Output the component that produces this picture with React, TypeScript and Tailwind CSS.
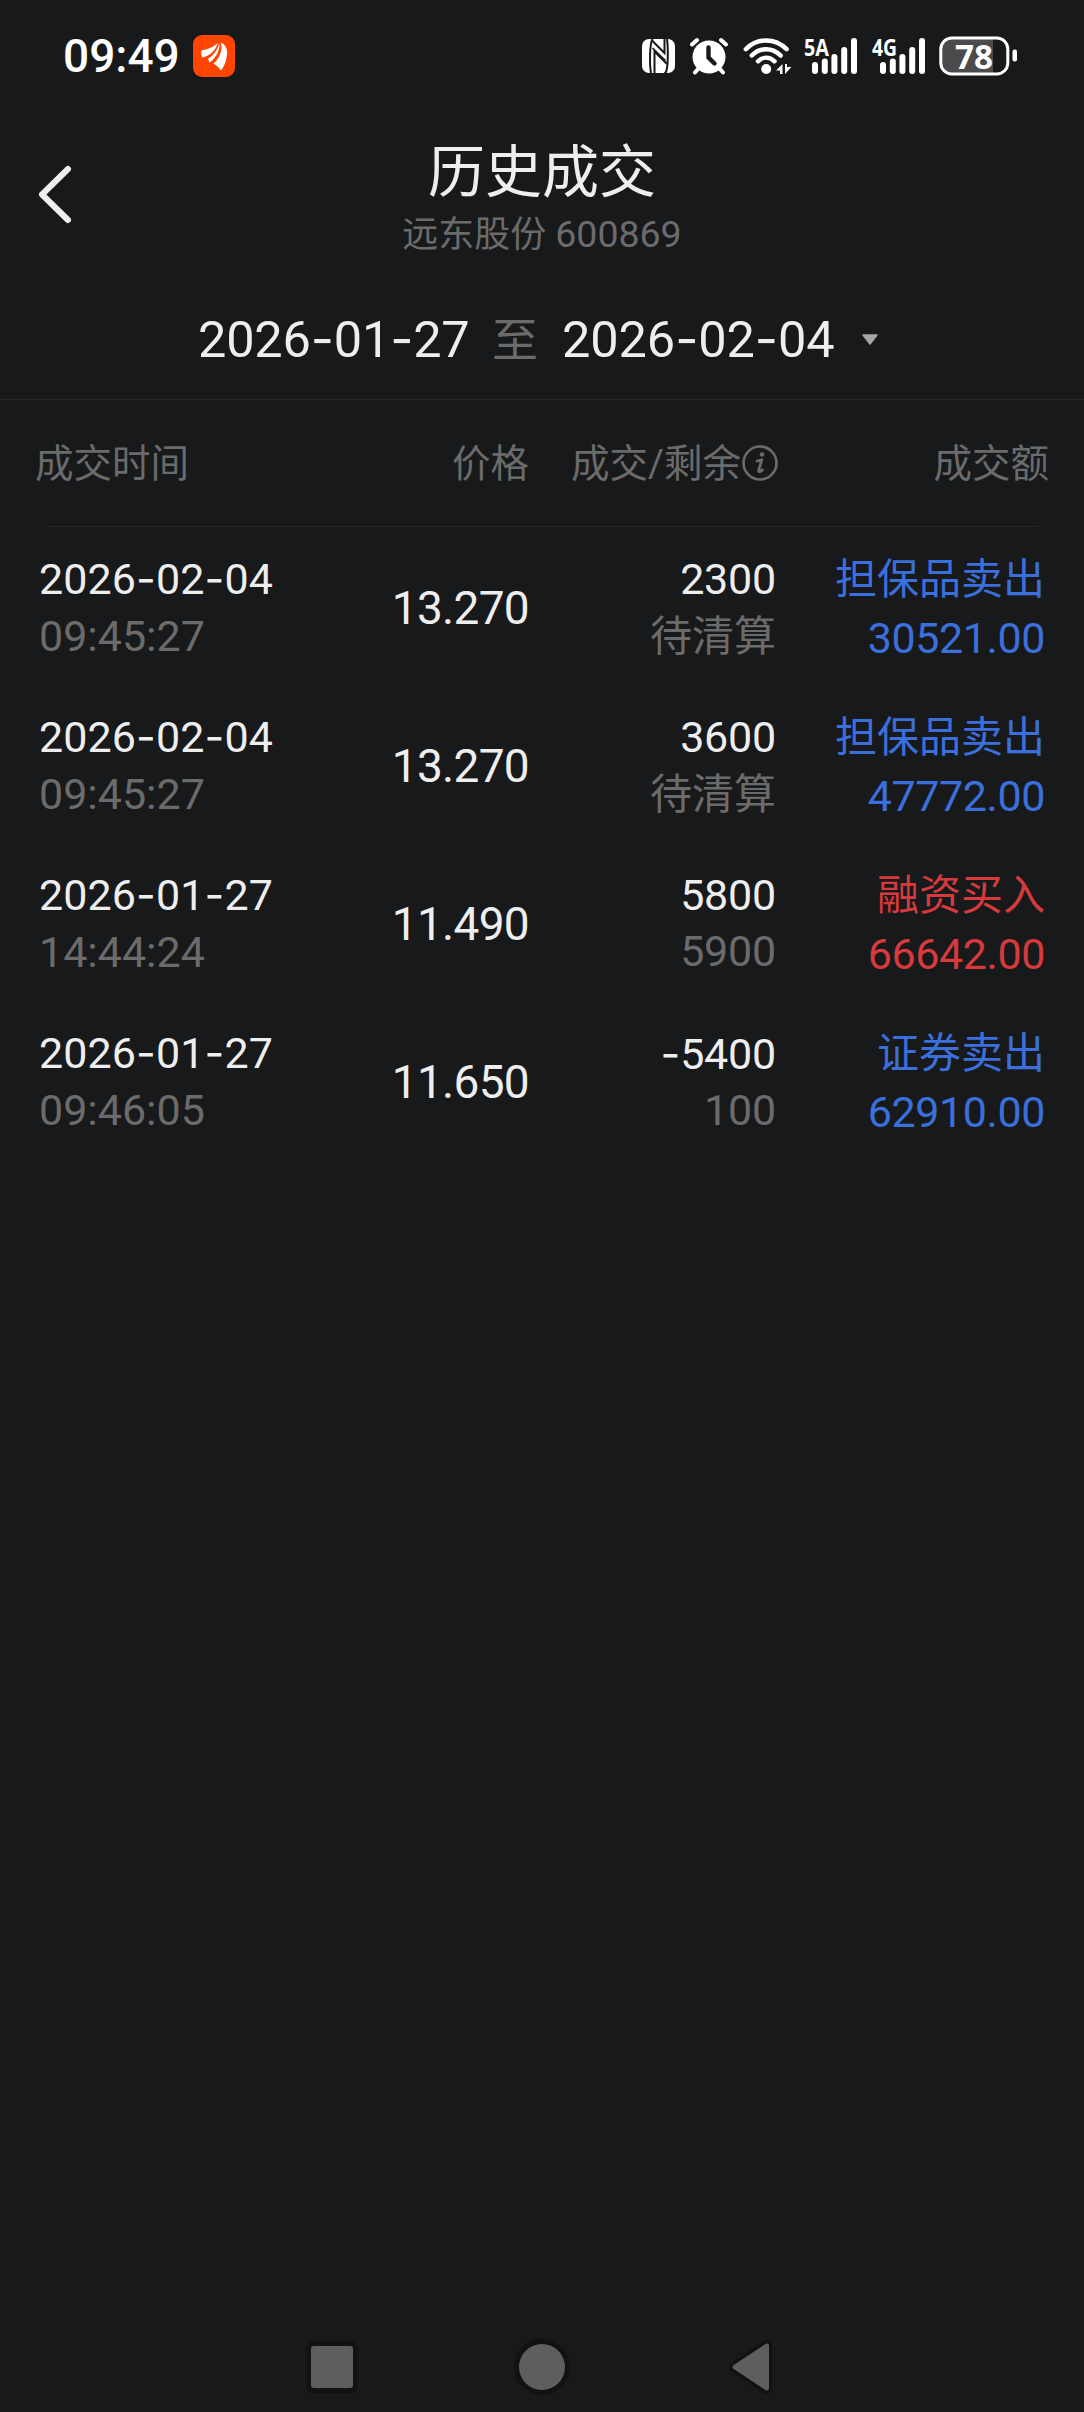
import { clsx } from 'clsx'

type Side = 'sell' | 'buy'

interface Deal {
  date: string
  time: string
  price: string
  amount: string
  rest: string
  kind: string
  total: string
  side: Side
}

const deals: Deal[] = [
  { date: '2026-02-04', time: '09:45:27', price: '13.270', amount: '2300', rest: '待清算', kind: '担保品卖出', total: '30521.00', side: 'sell' },
  { date: '2026-02-04', time: '09:45:27', price: '13.270', amount: '3600', rest: '待清算', kind: '担保品卖出', total: '47772.00', side: 'sell' },
  { date: '2026-01-27', time: '14:44:24', price: '11.490', amount: '5800', rest: '5900', kind: '融资买入', total: '66642.00', side: 'buy' },
  { date: '2026-01-27', time: '09:46:05', price: '11.650', amount: '-5400', rest: '100', kind: '证券卖出', total: '62910.00', side: 'sell' },
]

// Roboto's hyphen is too short between digits, so it is set in Inter
function Num({ value, className }: { value: string; className?: string }) {
  return (
    <span className={className}>
      {value.split(/(-)/).map((part, i) =>
        part === '-' ? <span key={i} className="font-['Inter']">-</span> : part
      )}
    </span>
  )
}

function Signal({ label }: { label: string }) {
  return (
    <svg className="overflow-visible" width="53" height="40" viewBox="0 0 53 40" fill="#fff">
      <text x="0" y="19.5" fontSize="24" fontWeight="700" textLength="25" lengthAdjust="spacingAndGlyphs" fontFamily="Open Sans">
        {label}
      </text>
      <rect x="8" y="26" width="6" height="12" rx="3" />
      <rect x="17.8" y="22.5" width="6" height="15.5" rx="3" />
      <rect x="27.4" y="18" width="6" height="20" rx="3" />
      <rect x="37.2" y="11" width="6" height="27" rx="3" />
      <rect x="47" y="2" width="6" height="36" rx="3" />
    </svg>
  )
}

function StatusBar() {
  return (
    <div className="flex h-[112px] items-center justify-between pr-[66px] pl-[63px]">
      <div className="flex items-center gap-[13px]">
        <span className="text-[46px] leading-[56px] font-medium text-white">09:49</span>
        <svg width="42" height="42" viewBox="0 0 42 42">
          <rect width="42" height="42" rx="9" fill="#ff4500" />
          <g fill="#fff">
            <path d="M8.500 15.500C14 14.500 20 12.500 24.800 8C23 15 17 21 9.500 22.500C8 20 8 18 8.500 15.500Z" />
            <path d="M26.300 7.800C27.500 15.500 22 24 16.500 27.800L15 23.700C21 20 25 14.500 26.300 7.800Z" />
            <path d="M28 7.500C34 10 35.500 17 33 25C32 29.500 30 33 27.800 35.500C26.500 33 23.500 30 20.500 28.500C26 24 30 16 28 7.500Z" />
          </g>
        </svg>
      </div>

      <div className="flex items-center">
        <svg className="mr-[15px]" width="33" height="40" viewBox="0 0 33 40">
          <rect y="3" width="33" height="34" rx="7" fill="#fff" />
          <g fill="none" stroke="#18191b" strokeWidth="2">
            <path d="M10.500 3C7.500 8 7.500 29 9 37" />
            <path d="M9.500 4L22.500 17V3" />
            <path d="M22.500 37L24 36C26.500 30 26 10 25 3" />
            <path d="M12.500 37V15.500L25 28" />
            <path d="M10.500 12L23.500 24.500" strokeWidth="1.500" />
          </g>
        </svg>
        <svg className="mr-[15px]" width="38" height="40" viewBox="0 0 38 40">
          <circle cx="19" cy="21" r="16.500" fill="#fff" />
          <path d="M2 8.500L7 4M36 8.500L31 4M8 33L5 36.500M30 33L33 36.500" stroke="#fff" strokeWidth="4" strokeLinecap="round" />
          <path d="M18.500 11.500V21.500L24.500 27.500" fill="none" stroke="#18191b" strokeWidth="4.400" strokeLinecap="round" />
        </svg>
        <svg className="mr-[13px]" width="48" height="40" viewBox="0 0 48 40">
          <g fill="none" stroke="#fff" strokeWidth="4.500" strokeLinecap="round">
            <path d="M2.800 13.200C14 1.600 32 1.600 43.600 13.200" />
            <path d="M8.800 19.500C17 11 29.500 11 37.600 19.500" />
            <path d="M15 25.300C20 20.500 26.500 20.500 31.500 25.300" />
          </g>
          <circle cx="23.200" cy="33" r="5" fill="#fff" />
          <path d="M39.500 28V38H37V34.500H33ZM42 38V28H44V31H48.500Z" fill="#fff" />
        </svg>
        <div className="mr-[15px]"><Signal label="5A" /></div>
        <div className="mr-[14px]"><Signal label="4G" /></div>
        <svg className="overflow-visible" width="79" height="40" viewBox="0 0 79 40">
          <path d="M12 3H54V37H12A10 10 0 0 1 2 27V13A10 10 0 0 1 12 3Z" fill="#4b4b4d" />
          <rect x="1.800" y="2" width="67" height="36" rx="11" fill="none" stroke="#fff" strokeWidth="3" />
          <rect x="73.500" y="13.500" width="4.500" height="12" rx="2" fill="#fff" />
          <text x="35" y="33" textAnchor="middle" fontSize="34" fontWeight="700" fill="#fff" textLength="38" lengthAdjust="spacingAndGlyphs" fontFamily="Open Sans">
            78
          </text>
        </svg>
      </div>
    </div>
  )
}

function TitleBar() {
  return (
    <div className="grid h-[168px] grid-cols-[120px_1fr_120px]">
      <button className="flex items-start pt-[52px] pl-[37px]" aria-label="返回">
        <svg width="36" height="60" viewBox="0 0 36 60" fill="none" stroke="#eee" strokeWidth="6" strokeLinecap="round" strokeLinejoin="round">
          <path d="M31 5L5 30.500L31 56" />
        </svg>
      </button>
      <div className="flex flex-col items-center pt-[27px]">
        <h1 className="text-[57px] leading-[68px] text-[#eee]">历史成交</h1>
        <p className="mt-[5px] text-[36px] leading-[44px] text-[#6b6b6b]">
          远东股份 <span className="text-[37.500px]">600869</span>
        </p>
      </div>
    </div>
  )
}

function DateRange() {
  return (
    <div className="flex h-[120px] items-center border-b border-[#27282a] pl-[198px] text-[50.500px] leading-[60px] text-[#eee]">
      <Num value="2026-01-27" className="w-[274px] tracking-[-0.2px]" />
      <span className="ml-[20px] w-[46px] text-[46px] text-[#6b6b6b]">至</span>
      <Num value="2026-02-04" className="ml-[24px] w-[274px] tracking-[-0.1px]" />
      <svg className="ml-[25px]" width="18" height="12" viewBox="0 0 18 12">
        <path d="M2 1H16L9 10Z" fill="#a6a6a6" stroke="#a6a6a6" strokeWidth="1.500" strokeLinejoin="round" />
      </svg>
    </div>
  )
}

function TableHead() {
  return (
    <div>
      <div className="flex h-[126px] items-center pt-[2px] pr-[35px] pl-[35px] text-[38.500px] leading-[48px] text-[#6b6b6b]">
        <span className="w-[200px]">成交时间</span>
        <span className="w-[294px] text-right">价格</span>
        <div className="flex w-[249px] items-center justify-end gap-[1px]">
          <span>成交/剩余</span>
          <svg className="mb-[2px]" width="36" height="36" viewBox="0 0 36 36" fill="none" stroke="#6b6b6b" strokeLinecap="round">
            <circle cx="18" cy="18" r="16.500" strokeWidth="2.600" />
            <circle cx="20" cy="9.500" r="2.200" fill="#6b6b6b" stroke="none" />
            <path d="M15 16L19.800 14.800L16.600 25.500C16.600 27.500 19 26.500 20.500 24.800" strokeWidth="2.800" strokeLinejoin="round" />
          </svg>
        </div>
        <span className="flex-1 text-right">成交额</span>
      </div>
      <div className="mx-[46px] h-px bg-[#27282a]" />
    </div>
  )
}

function DealRow({ deal }: { deal: Deal }) {
  return (
    <div className="flex h-[158px] border-b border-[#1b1c1e] pr-[39px] pl-[39px] text-[43px] leading-[56px] text-[#eee]">
      <div className="flex w-[260px] flex-col pt-[23px]">
        <Num value={deal.date} className="tracking-[0.1px]" />
        <span className="mt-px text-[#6b6b6b]">{deal.time}</span>
      </div>
      <div className="w-[230px] pt-[53px] text-right text-[46px] tracking-[-0.7px]">{deal.price}</div>
      <div className="flex w-[247px] flex-col pt-[24px] text-right">
        <Num value={deal.amount} className="tracking-[-0.2px]" />
        <span className={clsx(deal.rest === '待清算' ? 'mt-[2px] text-[42px]' : 'tracking-[-0.2px]', 'text-[#6b6b6b]')}>{deal.rest}</span>
      </div>
      <div className={clsx('flex flex-1 flex-col pt-[25px] text-right', deal.side === 'buy' ? 'text-[#d63a3c]' : 'text-[#3b70dc]')}>
        <span className="text-[42px]">{deal.kind}</span>
        <span className="mt-[2px] tracking-[-0.4px]">{deal.total}</span>
      </div>
    </div>
  )
}

function NavBar() {
  return (
    <div className="mt-auto flex h-[90px] items-center pl-[306px]">
      <svg width="470" height="58" viewBox="0 0 470 58" fill="#5d5e60">
        <g stroke="#111214" strokeWidth="10" strokeLinejoin="round">
          <rect x="5" y="8" width="42" height="42" rx="2" />
          <circle cx="236" cy="29" r="23" />
          <path d="M428 29L461 7V51Z" />
        </g>
        <rect x="5" y="8" width="42" height="42" rx="3" />
        <circle cx="236" cy="29" r="23" />
        <path d="M428.500 29L461 7.500V50.500Z" stroke="#5d5e60" strokeWidth="4" strokeLinejoin="round" />
      </svg>
    </div>
  )
}

export default function App() {
  return (
    <div className="flex h-[2412px] w-[1084px] flex-col bg-[#18191b] font-['Roboto','Noto_Sans_CJK_SC',sans-serif]">
      <StatusBar />
      <TitleBar />
      <DateRange />
      <TableHead />
      {deals.map((deal, i) => (
        <DealRow key={i} deal={deal} />
      ))}
      <NavBar />
    </div>
  )
}
